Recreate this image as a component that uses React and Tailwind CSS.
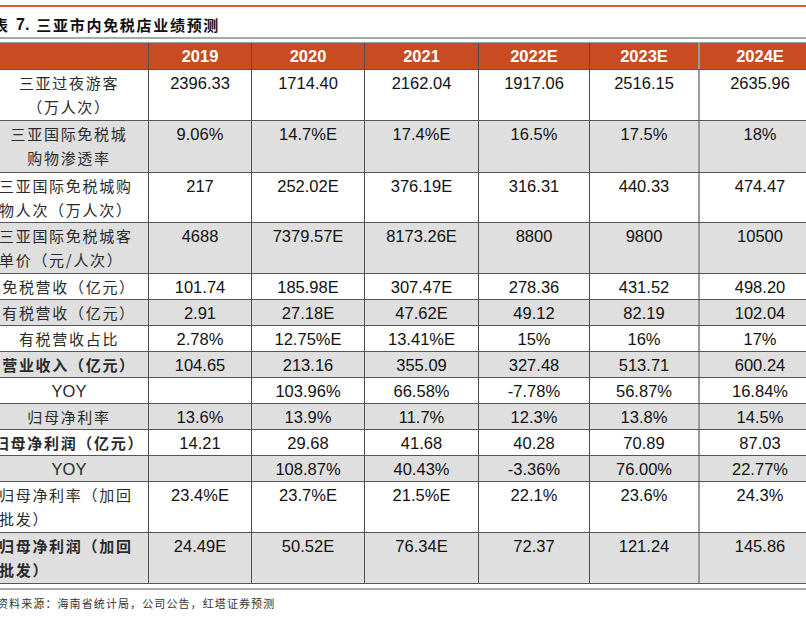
import React from 'react';

const cjk = "font-['Noto_Sans_CJK_SC',sans-serif]";
const num = "font-['Liberation_Sans',Arial,sans-serif]";

const years = ['2019', '2020', '2021', '2022E', '2023E', '2024E'];

// widths include the right border of each cell
const colW = ['w-[159px]', 'w-[103px]', 'w-[113px]', 'w-[114px]', 'w-[111px]', 'w-[110px]', 'w-[120px]'];

const rows = [
  { lines: ['三亚过夜游客', '（万人次）'], align: 'center', h: 'h-[51px]', vals: ['2396.33', '1714.40', '2162.04', '1917.06', '2516.15', '2635.96'] },
  { lines: ['三亚国际免税城', '购物渗透率'], align: 'center', h: 'h-[52px]', gray: true, vals: ['9.06%', '14.7%E', '17.4%E', '16.5%', '17.5%', '18%'] },
  { lines: ['三亚国际免税城购', '物人次（万人次）'], align: 'left', h: 'h-[50px]', vals: ['217', '252.02E', '376.19E', '316.31', '440.33', '474.47'] },
  { lines: ['三亚国际免税城客', '单价（元/人次）'], align: 'left', h: 'h-[51px]', gray: true, vals: ['4688', '7379.57E', '8173.26E', '8800', '9800', '10500'] },
  { lines: ['免税营收（亿元）'], align: 'center', vals: ['101.74', '185.98E', '307.47E', '278.36', '431.52', '498.20'] },
  { lines: ['有税营收（亿元）'], align: 'center', gray: true, vals: ['2.91', '27.18E', '47.62E', '49.12', '82.19', '102.04'] },
  { lines: ['有税营收占比'], align: 'center', vals: ['2.78%', '12.75%E', '13.41%E', '15%', '16%', '17%'] },
  { lines: ['营业收入（亿元）'], align: 'center', bold: true, gray: true, vals: ['104.65', '213.16', '355.09', '327.48', '513.71', '600.24'] },
  { lines: ['YOY'], align: 'center', latin: true, vals: ['', '103.96%', '66.58%', '-7.78%', '56.87%', '16.84%'] },
  { lines: ['归母净利率'], align: 'center', gray: true, vals: ['13.6%', '13.9%', '11.7%', '12.3%', '13.8%', '14.5%'] },
  { lines: ['归母净利润（亿元）'], align: 'center', bold: true, vals: ['14.21', '29.68', '41.68', '40.28', '70.89', '87.03'] },
  { lines: ['YOY'], align: 'center', latin: true, gray: true, vals: ['', '108.87%', '40.43%', '-3.36%', '76.00%', '22.77%'] },
  { lines: ['归母净利率（加回', '批发）'], align: 'left', h: 'h-[51px]', vals: ['23.4%E', '23.7%E', '21.5%E', '22.1%', '23.6%', '24.3%'] },
  { lines: ['归母净利润（加回', '批发）'], align: 'left', h: 'h-[51px]', bold: true, gray: true, vals: ['24.49E', '50.52E', '76.34E', '72.37', '121.24', '145.86'] },
];

function cellBorder(i) {
  if (i === 5) return 'border-r-2 border-[#9b9b9b]';
  if (i === 6) return '';
  return 'border-r border-[#4d4d4d]';
}

function Row({ row }) {
  const tall = row.lines.length > 1;
  return (
    <div className={`flex border-b border-[#555] ${tall ? row.h : 'h-[26px]'} ${row.gray ? 'bg-[#dfdfdf]' : 'bg-white'}`}>
      <div
        className={`${colW[0]} shrink-0 ${cellBorder(0)} ${tall ? 'pt-[1px]' : 'flex flex-col justify-center'} ${row.align === 'left' ? 'pl-[9px] text-left' : 'text-center'}`}
      >
        {row.lines.map((l, k) => (
          <div
            key={k}
            className={`whitespace-nowrap leading-[24px] text-[#2a2a2a] ${row.latin ? `${num} text-[16.5px]` : `${cjk} text-[15px] tracking-[1.7px]`} ${row.bold ? 'font-bold' : ''}`}
          >
            {l}
          </div>
        ))}
      </div>
      {row.vals.map((v, i) => (
        <div
          key={i}
          className={`${colW[i + 1]} shrink-0 ${cellBorder(i + 1)} text-center ${num} text-[16.5px] text-[#111] leading-[24px] ${tall ? 'pt-[1px]' : 'flex items-center justify-center'}`}
        >
          {v}
        </div>
      ))}
    </div>
  );
}

export default function App() {
  return (
    <div className="relative w-[806px] h-[621px] overflow-hidden bg-white">
      <div className="-ml-[10px] w-[830px]">
        <div className="h-[5px]" />
        <div className="h-[2px] bg-[#dd5b36]" />
        <div className="h-[30px] pt-[6px] pl-[3px] flex items-start leading-[24px] text-[#111] font-bold">
          <span className={`${cjk} text-[15px]`}>表</span>
          <span className={`${num} text-[16px] ml-[8px]`}>7.</span>
          <span className={`${cjk} text-[15px] tracking-[1.7px] ml-[7px]`}>三亚市内免税店业绩预测</span>
        </div>
        <div className="h-[2px] bg-[#a8a8a8]" />
        <div className="h-[3px]" />

        {/* header */}
        <div className="flex h-[28px] border-t border-[#9e9e9e] border-b border-b-[#555] bg-[#c84b21]">
          <div className={`${colW[0]} shrink-0 ${cellBorder(0)}`} />
          {years.map((y, i) => (
            <div
              key={y}
              className={`${colW[i + 1]} shrink-0 ${cellBorder(i + 1)} flex items-center justify-center pt-[1px] ${num} text-[16.5px] font-bold text-white`}
            >
              {y}
            </div>
          ))}
        </div>

        {rows.map((r, idx) => (
          <Row key={idx} row={r} />
        ))}

        <div className="h-[4px]" />
        <div className="h-[2px] bg-[#a8a8a8]" />
        <div className={`pl-[7px] pt-[5px] ${cjk} text-[11px] tracking-[1.1px] leading-[16px] text-[#333]`}>
          资料来源：海南省统计局，公司公告，红塔证券预测
        </div>
      </div>
    </div>
  );
}
